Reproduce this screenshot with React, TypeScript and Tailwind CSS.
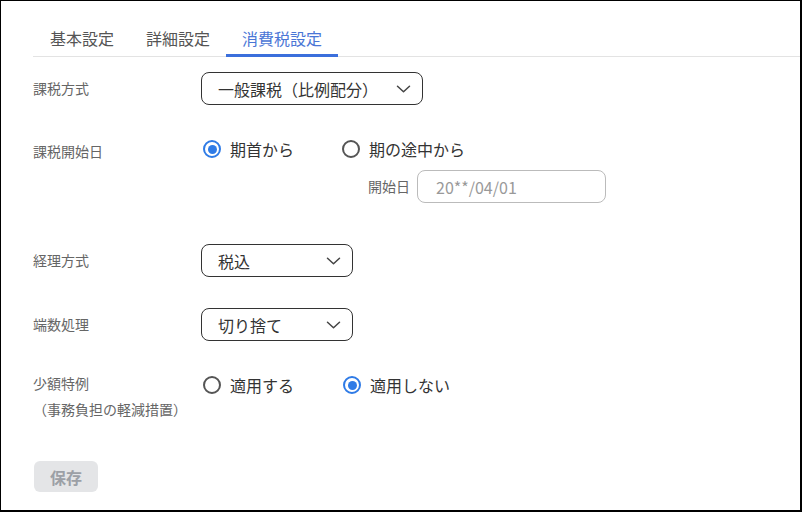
import React from "react";

const font = { fontFamily: '"Noto Sans CJK JP", "Noto Sans", sans-serif' };

function Chevron() {
  return (
    <svg width="15" height="8" viewBox="0 0 15 8" fill="none" className="shrink-0">
      <path d="M1.5 1.2 L7.5 6.8 L13.5 1.2" stroke="#444" strokeWidth="1.5" strokeLinecap="round" strokeLinejoin="round" />
    </svg>
  );
}

function Select({ value, width }: { value: string; width: string }) {
  return (
    <div className={`${width} h-[33px] flex items-center justify-between pl-4 pr-[11px] border border-[#333] rounded-lg text-[16px] text-[#333]`}>
      <span>{value}</span>
      <Chevron />
    </div>
  );
}

function Radio({ label, checked, width }: { label: string; checked?: boolean; width?: string }) {
  return (
    <div className={`flex items-center gap-[9px] ${width ?? ""}`}>
      <span
        className={`size-[18px] rounded-full border-2 flex items-center justify-center shrink-0 ${
          checked ? "border-[#2f7be6]" : "border-[#555]"
        }`}
      >
        {checked && <span className="size-[9px] rounded-full bg-[#2f7be6]" />}
      </span>
      <span className="text-[16px] text-[#333]">{label}</span>
    </div>
  );
}

export default function App() {
  const tabs = ["基本設定", "詳細設定", "消費税設定"];
  return (
    <div className="w-[802px] h-[512px] bg-white border border-black border-r-2 border-b-2 overflow-hidden" style={font}>
      <div className="pl-[32px] pt-[21px]">
        {/* Tabs */}
        <div className="flex border-b border-[#e3e3e3] pl-px">
          {tabs.map((t, i) => (
            <div
              key={t}
              className={`px-4 h-[35px] flex items-center text-[16px] -mb-px border-b-[3px] ${
                i === 2 ? "text-[#4a76d6] border-[#3b6fdc]" : "text-[#555] border-transparent"
              }`}
            >
              {t}
            </div>
          ))}
        </div>

        {/* 課税方式 */}
        <div className="flex items-center mt-[15px]">
          <div className="w-[168px] text-[14px] text-[#666]">課税方式</div>
          <Select value="一般課税（比例配分）" width="w-[222px]" />
        </div>

        {/* 課税開始日 */}
        <div className="flex mt-[32px]">
          <div className="w-[168px] text-[14px] text-[#666] pt-[4px]">課税開始日</div>
          <div className="flex flex-col pl-[2px]">
            <div className="flex items-center h-[24px]">
              <Radio label="期首から" checked width="w-[139px]" />
              <Radio label="期の途中から" />
            </div>
            <div className="flex items-center mt-[9px] ml-[165px] gap-[7px]">
              <span className="text-[14px] text-[#666]">開始日</span>
              <div className="w-[189px] h-[33px] flex items-center px-[18px] border border-[#bbb] rounded-lg text-[16px] text-[#999]">
                20**/04/01
              </div>
            </div>
          </div>
        </div>

        {/* 経理方式 */}
        <div className="flex items-center mt-[41px]">
          <div className="w-[168px] text-[14px] text-[#666]">経理方式</div>
          <Select value="税込" width="w-[152px]" />
        </div>

        {/* 端数処理 */}
        <div className="flex items-center mt-[31px]">
          <div className="w-[168px] text-[14px] text-[#666]">端数処理</div>
          <Select value="切り捨て" width="w-[152px]" />
        </div>

        {/* 少額特例 */}
        <div className="flex mt-[31px]">
          <div className="w-[168px] text-[14px] text-[#666] leading-[26px] -mt-[2px]">
            <div>少額特例</div>
            <div>（事務負担の軽減措置）</div>
          </div>
          <div className="flex items-center h-[24px] pl-[2px] mt-[1px]">
            <Radio label="適用する" width="w-[140px]" />
            <Radio label="適用しない" checked />
          </div>
        </div>

        {/* 保存 */}
        <button className="mt-[39px] ml-px w-[64px] h-[31px] rounded-md bg-[#e4e5e7] text-[16px] font-bold text-[#9ca0a6]">
          保存
        </button>
      </div>
    </div>
  );
}
